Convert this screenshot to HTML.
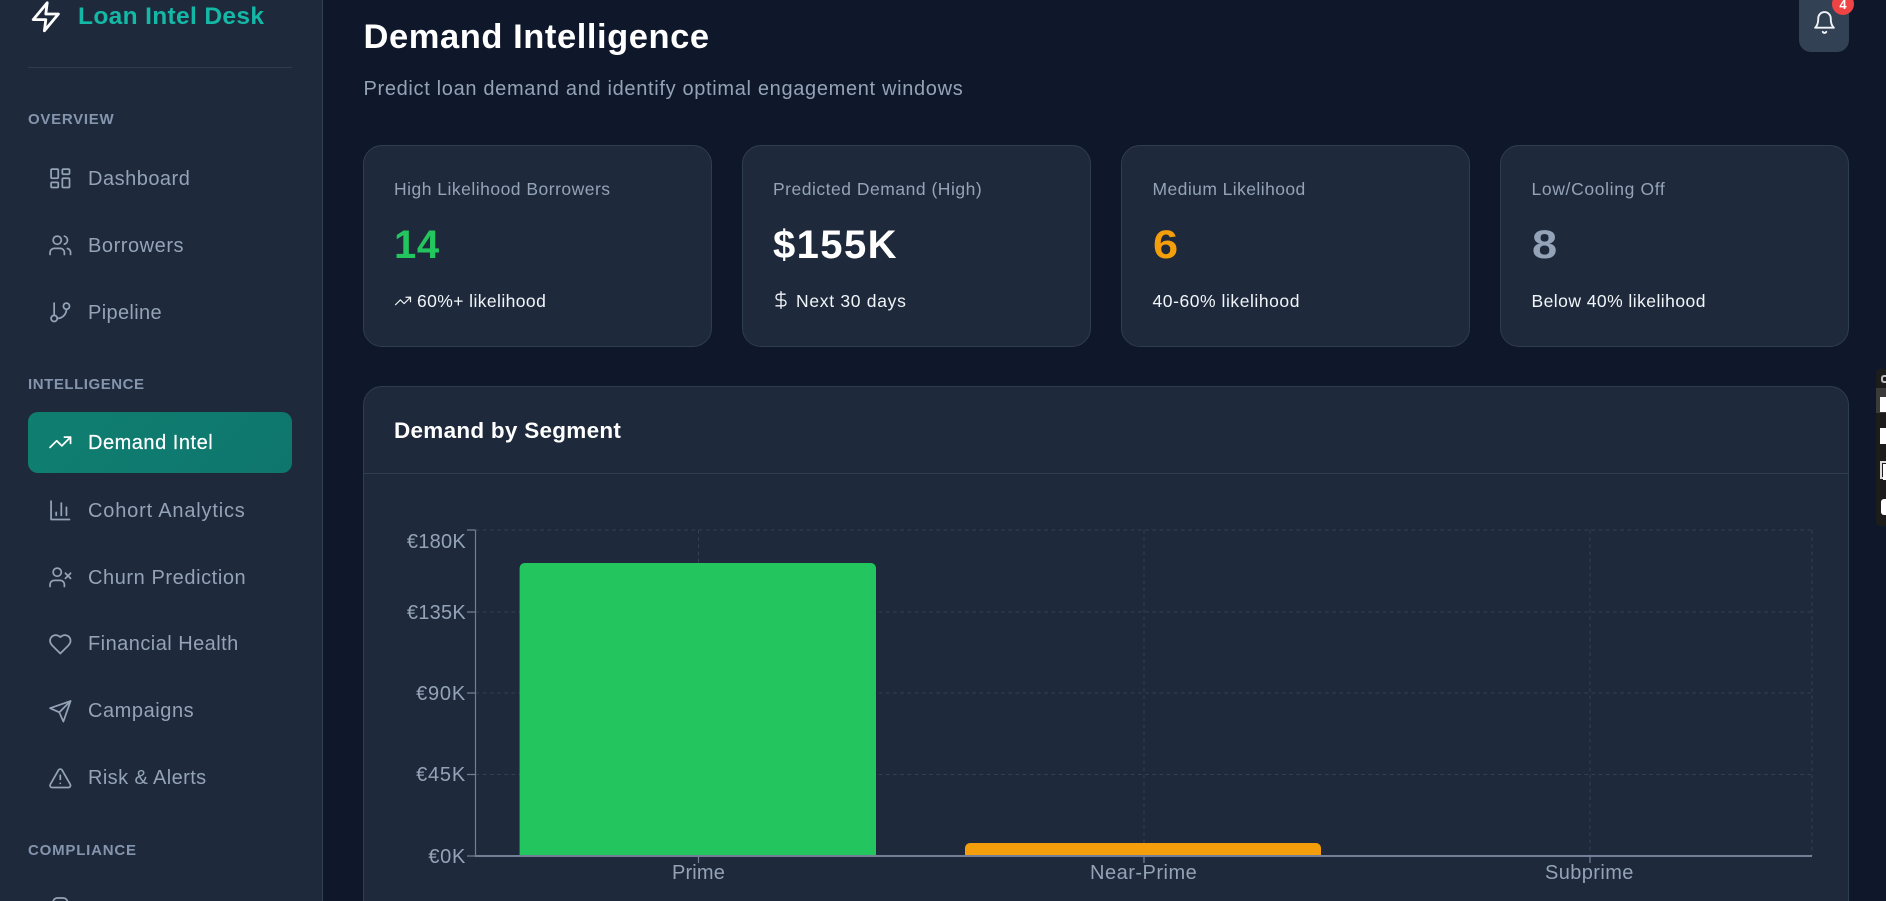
<!DOCTYPE html>
<html lang="en">
<head>
<meta charset="utf-8">
<title>Demand Intelligence - Loan Intel Desk</title>
<style>
html,body{margin:0;padding:0;width:1886px;height:901px;overflow:hidden;background:#0f172a;font-family:"Liberation Sans",Arial,sans-serif}
*{box-sizing:border-box}
#app{position:relative;width:1886px;height:901px;overflow:hidden;background:#0f172a}
.t{position:absolute;white-space:nowrap;line-height:1}
aside{position:absolute;left:0;top:0;width:323px;height:901px;background:#1e293b;border-right:1px solid #334155;overflow:hidden}
.divider{position:absolute;left:28px;top:67px;width:264px;height:1px;background:#2d3b50}
.sec{font-size:15px;font-weight:700;color:#8595ae;left:28px}
.nav{font-size:20px;color:#94a3b8;left:88px}
.ic{position:absolute;left:48.2px;width:24.6px;height:24.6px;fill:none;stroke:#94a3b8;stroke-width:1.7;stroke-linecap:round;stroke-linejoin:round}
.active{position:absolute;left:28px;top:412px;width:264px;height:61px;border-radius:10px;background:linear-gradient(135deg,#0f7f70,#0f766e)}
.card{position:absolute;top:145px;width:349px;height:202px;background:#1e293b;border:1px solid #2f3d52;border-radius:19px}
.lab{font-size:17.5px;color:#94a3b8;top:181px}
.val{font-size:40px;font-weight:700;top:225px}
.sub{font-size:17.5px;color:#f1f5f9;top:293px}
.chart{position:absolute;left:363px;top:386px;width:1486px;height:540px;background:#1e293b;border:1px solid #2f3d52;border-radius:19px}
.hr{position:absolute;left:364px;top:473px;width:1484px;height:1px;background:#2f3d52}
.y{font-size:20px;color:#94a3b8;text-align:right;width:90px;left:376px}
.x{font-size:20px;color:#94a3b8;top:863px}
svg{position:absolute;overflow:visible}
</style>
</head>
<body>
<div id="app">
<aside>
  <svg style="left:29.2px;top:0;width:33.6px;height:33.6px;fill:none;stroke:#fff;stroke-width:2;stroke-linecap:round;stroke-linejoin:round" viewBox="0 0 24 24"><path d="M13 2 3 14h9l-1 8 10-12h-9l1-8z"/></svg>
  <div class="t" style="left:78px;top:5px;font-size:24.5px;font-weight:700;color:#14b8a6;letter-spacing:.35px">Loan Intel Desk</div>
  <div class="divider"></div>

  <div class="t sec" style="top:112px;letter-spacing:.73px">OVERVIEW</div>
  <svg class="ic" style="top:165.7px" viewBox="0 0 24 24"><rect x="3" y="3" width="7" height="9" rx="1"/><rect x="14" y="3" width="7" height="5" rx="1"/><rect x="14" y="12" width="7" height="9" rx="1"/><rect x="3" y="16" width="7" height="5" rx="1"/></svg>
  <div class="t nav" style="top:168.5px;letter-spacing:.5px">Dashboard</div>
  <svg class="ic" style="top:232.7px" viewBox="0 0 24 24"><path d="M16 21v-2a4 4 0 0 0-4-4H6a4 4 0 0 0-4 4v2"/><circle cx="9" cy="7" r="4"/><path d="M22 21v-2a4 4 0 0 0-3-3.87"/><path d="M16 3.13a4 4 0 0 1 0 7.75"/></svg>
  <div class="t nav" style="top:235.5px;letter-spacing:.55px">Borrowers</div>
  <svg class="ic" style="top:299.7px" viewBox="0 0 24 24"><line x1="6" y1="3" x2="6" y2="15"/><circle cx="18" cy="6" r="3"/><circle cx="6" cy="18" r="3"/><path d="M18 9a9 9 0 0 1-9 9"/></svg>
  <div class="t nav" style="top:302.5px;letter-spacing:.35px">Pipeline</div>

  <div class="t sec" style="top:377px;letter-spacing:.55px">INTELLIGENCE</div>
  <div class="active"></div>
  <svg class="ic" style="top:430.2px;stroke:#fff" viewBox="0 0 24 24"><polyline points="22 7 13.5 15.5 8.5 10.5 2 17"/><polyline points="16 7 22 7 22 13"/></svg>
  <div class="t nav" style="top:433px;color:#fff;letter-spacing:.52px;-webkit-text-stroke:.2px #fff">Demand Intel</div>
  <svg class="ic" style="top:497.7px" viewBox="0 0 24 24"><path d="M3 3v18h18"/><path d="M18 17V9"/><path d="M13 17V5"/><path d="M8 17v-3"/></svg>
  <div class="t nav" style="top:500.5px;letter-spacing:.82px">Cohort Analytics</div>
  <svg class="ic" style="top:564.7px" viewBox="0 0 24 24"><path d="M16 21v-2a4 4 0 0 0-4-4H6a4 4 0 0 0-4 4v2"/><circle cx="9" cy="7" r="4"/><line x1="17" y1="8" x2="22" y2="13"/><line x1="22" y1="8" x2="17" y2="13"/></svg>
  <div class="t nav" style="top:567.5px;letter-spacing:.58px">Churn Prediction</div>
  <svg class="ic" style="top:631.7px" viewBox="0 0 24 24"><path d="M19 14c1.49-1.46 3-3.21 3-5.5A5.5 5.5 0 0 0 16.5 3c-1.76 0-3 .5-4.5 2-1.5-1.5-2.74-2-4.5-2A5.5 5.5 0 0 0 2 8.5c0 2.3 1.5 4.05 3 5.5l7 7Z"/></svg>
  <div class="t nav" style="top:634px;letter-spacing:.46px">Financial Health</div>
  <svg class="ic" style="top:698.7px" viewBox="0 0 24 24"><path d="m22 2-7 20-4-9-9-4Z"/><path d="M22 2 11 13"/></svg>
  <div class="t nav" style="top:701px;letter-spacing:.56px">Campaigns</div>
  <svg class="ic" style="top:765.7px" viewBox="0 0 24 24"><path d="m21.73 18-8-14a2 2 0 0 0-3.48 0l-8 14A2 2 0 0 0 4 21h16a2 2 0 0 0 1.73-3Z"/><path d="M12 9v4"/><path d="M12 17h.01"/></svg>
  <div class="t nav" style="top:768px;letter-spacing:.4px">Risk &amp; Alerts</div>

  <div class="t sec" style="top:843px;letter-spacing:.8px">COMPLIANCE</div>
  <svg class="ic" style="top:896px" viewBox="0 0 24 24"><path d="M5 6a4 4 0 0 1 4-4h6a4 4 0 0 1 4 4v16H5z"/></svg>
  <div class="t nav" style="top:901px;letter-spacing:.4px">Audit Trail</div>
</aside>

<main>
  <h1 class="t" style="margin:0;left:363.5px;top:19.5px;font-size:34.5px;font-weight:700;color:#fff;letter-spacing:.56px">Demand Intelligence</h1>
  <div class="t" style="left:363.5px;top:79px;font-size:20px;color:#94a3b8;letter-spacing:.67px">Predict loan demand and identify optimal engagement windows</div>

  <div style="position:absolute;left:1799px;top:-10px;width:50px;height:62px;border-radius:12px;background:#334155"></div>
  <svg style="left:1811.5px;top:9.5px;width:25px;height:25px;fill:none;stroke:#f1f5f9;stroke-width:1.8;stroke-linecap:round;stroke-linejoin:round" viewBox="0 0 24 24"><path d="M6 8a6 6 0 0 1 12 0c0 7 3 9 3 9H3s3-2 3-9"/><path d="M10.3 21a1.94 1.94 0 0 0 3.4 0"/></svg>
  <div style="position:absolute;left:1832px;top:-7px;width:22px;height:22px;border-radius:50%;background:#ef4444"></div>
  <div class="t" style="left:1832px;width:22px;text-align:center;top:-2px;font-size:13px;font-weight:700;color:#fff">4</div>

  <div class="card" style="left:363px"></div>
  <div class="card" style="left:742px"></div>
  <div class="card" style="left:1121px"></div>
  <div class="card" style="left:1500px"></div>

  <div class="t lab" style="left:394px;letter-spacing:.49px">High Likelihood Borrowers</div>
  <div class="t val" style="left:394px;color:#22c55e;letter-spacing:.6px">14</div>
  <svg style="left:393.5px;top:292px;width:18px;height:18px;fill:none;stroke:#f1f5f9;stroke-width:1.6;stroke-linecap:round;stroke-linejoin:round" viewBox="0 0 24 24"><polyline points="22 7 13.5 15.5 8.5 10.5 2 17"/><polyline points="16 7 22 7 22 13"/></svg>
  <div class="t sub" style="left:417px;letter-spacing:.41px">60%+ likelihood</div>

  <div class="t lab" style="left:773px;letter-spacing:.51px">Predicted Demand (High)</div>
  <div class="t val" style="left:773px;color:#fff;letter-spacing:1.4px">$155K</div>
  <svg style="left:771px;top:290px;width:20px;height:20px;fill:none;stroke:#f1f5f9;stroke-width:1.6;stroke-linecap:round;stroke-linejoin:round" viewBox="0 0 24 24"><line x1="12" y1="2" x2="12" y2="22"/><path d="M17 5H9.5a3.5 3.5 0 0 0 0 7h5a3.5 3.5 0 0 1 0 7H6"/></svg>
  <div class="t sub" style="left:796px;letter-spacing:.7px">Next 30 days</div>

  <div class="t lab" style="left:1152.5px;letter-spacing:.43px">Medium Likelihood</div>
  <div class="t val" style="left:1152.5px;color:#f59e0b;transform:scaleX(1.13);transform-origin:left">6</div>
  <div class="t sub" style="left:1152.5px;letter-spacing:.55px">40-60% likelihood</div>

  <div class="t lab" style="left:1531.5px;letter-spacing:.65px">Low/Cooling Off</div>
  <div class="t val" style="left:1531.5px;color:#94a3b8;transform:scaleX(1.13);transform-origin:left">8</div>
  <div class="t sub" style="left:1531.5px;letter-spacing:.45px">Below 40% likelihood</div>

  <div class="chart"></div>
  <div class="hr"></div>
  <div class="t" style="left:394px;top:420px;font-size:22.5px;font-weight:700;color:#fff;letter-spacing:.27px">Demand by Segment</div>

  <svg style="left:0;top:0;width:1886px;height:901px" viewBox="0 0 1886 901">
    <g stroke="#334155" stroke-width="1" stroke-dasharray="3.6 3.6" fill="none">
      <path d="M475.5 530H1812M475.5 612H1812M475.5 693H1812M475.5 774.5H1812"/>
      <path d="M698.5 530V856M1144 530V856M1590 530V856M1812 530V856"/>
    </g>
    <path d="M519.6 856V568a5 5 0 0 1 5-5H871a5 5 0 0 1 5 5V856Z" fill="#22c55e"/>
    <path d="M965 856V848a5 5 0 0 1 5-5H1316a5 5 0 0 1 5 5V856Z" fill="#f59e0b"/>
    <g stroke="#718096" stroke-width="1.2" fill="none">
      <path d="M475.5 530V856"/>
      <path d="M467 530H475.5M467 612H475.5M467 693H475.5M467 774.5H475.5M467 856H475.5"/>
      <path d="M698.5 856V863M1144 856V863M1590 856V863"/>
    </g>
    <path d="M475 856H1812" stroke="#718096" stroke-width="2" fill="none"/>
  </svg>

  <div class="t y" style="top:531.5px;letter-spacing:.25px">€180K</div>
  <div class="t y" style="top:602.5px;letter-spacing:.25px">€135K</div>
  <div class="t y" style="top:683.5px;letter-spacing:.8px">€90K</div>
  <div class="t y" style="top:764.5px;letter-spacing:.8px">€45K</div>
  <div class="t y" style="top:846.5px;letter-spacing:.7px">€0K</div>
  <div class="t x" style="left:672px;letter-spacing:.15px">Prime</div>
  <div class="t x" style="left:1090px;letter-spacing:.5px">Near-Prime</div>
  <div class="t x" style="left:1545px;letter-spacing:.4px">Subprime</div>
</main>

<div style="position:absolute;left:1876px;top:369px;width:10px;height:157px;background:#1c1c1c;border-radius:4px 0 0 4px"></div>
<div style="position:absolute;left:1876px;top:388px;width:10px;height:25px;background:#3a3a3a"></div>
<div style="position:absolute;left:1881px;top:375px;width:5px;height:8px;border:2px solid #bbb;border-right:0;border-radius:3px 0 0 3px"></div>
<div style="position:absolute;left:1880px;top:397px;width:6px;height:15px;background:#fff"></div>
<div style="position:absolute;left:1880px;top:428px;width:6px;height:16px;background:#fff"></div>
<div style="position:absolute;left:1880px;top:461px;width:6px;height:18px;border:2px solid #ddd;border-right:0"></div>
<div style="position:absolute;left:1883px;top:464px;width:3px;height:16px;background:#fff"></div>
<div style="position:absolute;left:1881px;top:499px;width:5px;height:16px;background:#fff;border-radius:3px 0 0 3px"></div>
</div>
</body>
</html>
